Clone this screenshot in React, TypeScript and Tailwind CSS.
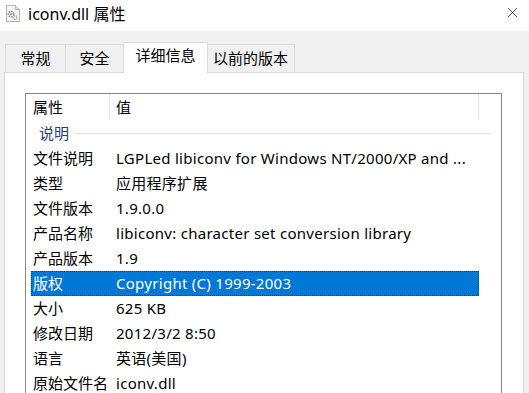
import { X } from "lucide-react";

const rows: [string, string][] = [
  ["文件说明", "LGPLed libiconv for Windows NT/2000/XP and ..."],
  ["类型", "应用程序扩展"],
  ["文件版本", "1.9.0.0"],
  ["产品名称", "libiconv: character set conversion library"],
  ["产品版本", "1.9"],
  ["版权", "Copyright (C) 1999-2003"],
  ["大小", "625 KB"],
  ["修改日期", "2012/3/2 8:50"],
  ["语言", "英语(美国)"],
  ["原始文件名", "iconv.dll"],
];

function FileIcon() {
  return (
    <svg width="16" height="17" viewBox="0 0 16 17">
      <path d="M1.5 0.5h9l4 4v12h-13z" fill="#f4f4f4" stroke="#b4b4b4" />
      <path d="M10.5 0.5v4h4" fill="#e2e2e2" stroke="#b4b4b4" />
      <circle cx="6" cy="9" r="2.6" fill="none" stroke="#8a8a8a" strokeWidth="1.6" strokeDasharray="1.4 1" />
      <circle cx="6" cy="9" r="0.9" fill="#8a8a8a" />
      <circle cx="10" cy="12.5" r="1.8" fill="none" stroke="#9a9a9a" strokeWidth="1.3" strokeDasharray="1.2 0.9" />
    </svg>
  );
}

function Tab({ label, active, w }: { label: string; active?: boolean; w: string }) {
  if (active) {
    return (
      <div className={`${w} h-[31px] -mx-[1px] relative z-10 -mb-px bg-white border border-b-0 border-[#d9d9d9] flex justify-center pt-[1px] text-[15px]`}>
        {label}
      </div>
    );
  }
  return (
    <div className={`${w} h-[28px] border border-b-0 border-[#d9d9d9] -ml-px first:ml-0 flex justify-center pt-[2px] text-[15px] bg-[#f0f0f0]`}>
      {label}
    </div>
  );
}

export default function App() {
  return (
    <div
      className="w-[529px] h-[393px] overflow-hidden bg-[#f0f0f0] text-black"
      style={{ fontFamily: '"Noto Sans", "Noto Sans CJK SC", sans-serif' }}
    >
      <div className="h-[31px] bg-white flex items-start pt-[5px] pl-[5px] pr-[8px]">
        <FileIcon />
        <span className="ml-[7px] text-[16px] leading-none mt-[1px]">iconv.dll 属性</span>
        <X className="ml-auto mt-[-1px] w-[17px] h-[17px] text-black" strokeWidth={1} />
      </div>

      <div className="pt-[10px] pl-[4px] pr-[5px]">
        <div className="flex items-end pl-[1px] h-[31px]">
          <Tab label="常规" w="w-[61px]" />
          <Tab label="安全" w="w-[59px]" />
          <Tab label="详细信息" active w="w-[85px]" />
          <Tab label="以前的版本" w="w-[89px]" />
        </div>

        <div className="bg-white border border-[#d9d9d9] h-[330px] pl-[20px] pt-[20px] pr-[21px]">
          <div className="w-[477px] h-[320px] border border-[#828790] text-[15px]">
            <div className="h-[27px] flex items-center pl-[7px]">
              <span className="w-[76px]">属性</span>
              <span className="w-px h-[26px] bg-[#e5e5e5] self-start" />
              <span className="pl-[6px] w-[368px]">值</span>
              <span className="w-px h-[26px] bg-[#e5e5e5] self-start" />
            </div>
            <div className="h-[25px] flex items-center pl-[13px] pr-[10px]">
              <span className="text-[#1e3b8e]">说明</span>
              <span className="flex-1 h-px bg-[#dde4ee] ml-[5px]" />
            </div>
            {rows.map(([k, v]) => {
              const sel = k === "版权";
              return (
                <div
                  key={k}
                  className={`ml-[5px] w-[448px] h-[25px] flex items-center ${
                    sel ? "bg-[#0078d7] text-white outline-1 outline-dotted outline-[#3a3a3a] -outline-offset-1" : ""
                  }`}
                >
                  <span className="w-[85px] pl-[2px] whitespace-nowrap">{k}</span>
                  <span className="whitespace-nowrap tracking-[0.28px]">{v}</span>
                </div>
              );
            })}
          </div>
        </div>
      </div>
    </div>
  );
}
